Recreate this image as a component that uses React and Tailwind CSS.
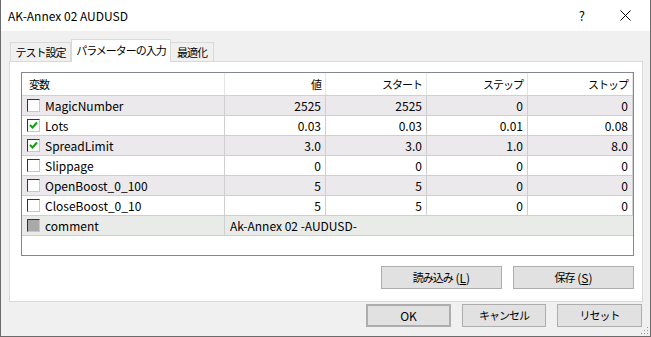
import React from 'react';

const rows = [
  { name: 'MagicNumber', checked: false, vals: ['2525', '2525', '0', '0'], shade: true },
  { name: 'Lots', checked: true, vals: ['0.03', '0.03', '0.01', '0.08'], shade: false },
  { name: 'SpreadLimit', checked: true, vals: ['3.0', '3.0', '1.0', '8.0'], shade: true },
  { name: 'Slippage', checked: false, vals: ['0', '0', '0', '0'], shade: false },
  { name: 'OpenBoost_0_100', checked: false, vals: ['5', '5', '0', '0'], shade: true },
  { name: 'CloseBoost_0_10', checked: false, vals: ['5', '5', '0', '0'], shade: false },
];

// narrow Japanese text, like Yu Gothic UI
const Jp = ({ children }) => (
  <span className="text-[11px] tracking-[-1px] whitespace-nowrap">{children}</span>
);

const Checkbox = ({ checked, disabled }) => (
  <div className="w-[13px] h-[13px] border-t border-l border-t-[#333] border-l-[#333] border-r border-b border-r-[#c8c8c8] border-b-[#c8c8c8] bg-white flex items-center justify-center shrink-0">
    {disabled && <div className="w-[11px] h-[11px] bg-[#a9a9a9]" />}
    {checked && (
      <svg width="9" height="9" viewBox="0 0 9 9">
        <path d="M1 4 L3.5 6.5 L8 1.5" fill="none" stroke="#12a012" strokeWidth="2" />
      </svg>
    )}
  </div>
);

const Btn = ({ children, className = '' }) => (
  <button className={`h-[23px] bg-[#e1e1e1] border border-[#adadad] text-[12px] text-black flex items-center justify-center whitespace-nowrap ${className}`}>
    {children}
  </button>
);

const cols = 'grid grid-cols-[203px_101px_101px_101px_105px]';

export default function App() {
  return (
    <div
      className="w-[651px] h-[337px] flex flex-col border-l border-r border-b border-[#6b6b6b] bg-[#f0f0f0] relative overflow-hidden"
      style={{ fontFamily: '"Noto Sans CJK JP", "Noto Sans", sans-serif' }}
    >
      {/* title bar */}
      <div className="h-[31px] bg-white flex items-center pl-[7px] shrink-0">
        <span className="text-[12px] text-black">AK-Annex 02 AUDUSD</span>
        <div className="flex-1" />
        <span className="text-[13px] text-black mr-[35px]">?</span>
        <svg width="11" height="11" viewBox="0 0 11 11" className="mr-[19px]">
          <path d="M0.5 0.5 L10.5 10.5 M10.5 0.5 L0.5 10.5" stroke="#000" strokeWidth="1" />
        </svg>
      </div>

      {/* tabs */}
      <div className="flex items-end h-[22px] mt-[8px] ml-[9px] text-black relative z-10">
        <div className="h-[19px] w-[61px] border border-b-0 border-[#d9d9d9] bg-[#f0f0f0] flex items-center justify-center"><Jp>テスト設定</Jp></div>
        <div className="h-[23px] w-[100px] border border-b-0 border-[#d9d9d9] bg-white flex items-center justify-center -mb-px pb-[2px]"><Jp>パラメーターの入力</Jp></div>
        <div className="h-[19px] w-[43px] border border-b-0 border-l-0 border-[#d9d9d9] bg-[#f0f0f0] flex items-center justify-center"><Jp>最適化</Jp></div>
      </div>

      {/* panel */}
      <div className="h-[241px] ml-[8px] mr-[7px] bg-white border border-[#d9d9d9] pt-[10px] pl-[11px] pr-[8px] flex flex-col">
        <div className="h-[184px] border border-[#828790] text-[12px] text-black">
          <div className={`${cols} h-[23px] border-b border-[#d0d0d0]`}>
            <div className="flex items-center pl-[7px] border-r border-[#e5e5e5]"><Jp>変数</Jp></div>
            <div className="flex items-center justify-end pr-[4px] border-r border-[#e5e5e5]"><Jp>値</Jp></div>
            <div className="flex items-center justify-end pr-[4px] border-r border-[#e5e5e5]"><Jp>スタート</Jp></div>
            <div className="flex items-center justify-end pr-[4px] border-r border-[#e5e5e5]"><Jp>ステップ</Jp></div>
            <div className="flex items-center justify-end pr-[4px] border-r border-[#e5e5e5]"><Jp>ストップ</Jp></div>
          </div>
          {rows.map((r) => (
            <div key={r.name} className={`${cols} h-[20px] border-b border-[#cfcfcf] ${r.shade ? 'bg-[#ebe9ec]' : 'bg-white'}`}>
              <div className="flex items-center pl-[5px] gap-[5px] border-r border-[#cfcfcf]">
                <Checkbox checked={r.checked} />
                <span>{r.name}</span>
              </div>
              {r.vals.map((v, i) => (
                <div key={i} className="flex items-center justify-end pr-[4px] border-r border-[#cfcfcf]">{v}</div>
              ))}
            </div>
          ))}
          <div className="grid grid-cols-[203px_408px] h-[20px] border-b border-[#cfcfcf] bg-[#e8ebe8]">
            <div className="flex items-center pl-[5px] gap-[5px] border-r border-[#cfcfcf]">
              <Checkbox disabled />
              <span>comment</span>
            </div>
            <div className="flex items-center pl-[5px]">Ak-Annex 02 -AUDUSD-</div>
          </div>
        </div>
        <div className="flex justify-end gap-[11px] mt-[10px]">
          <Btn className="w-[121px]"><Jp>読み込み</Jp>&nbsp;(<span className="underline">L</span>)</Btn>
          <Btn className="w-[121px]"><Jp>保存</Jp>&nbsp;(<span className="underline">S</span>)</Btn>
        </div>
      </div>

      {/* bottom buttons */}
      <div className="flex justify-end gap-[11px] mt-[2px] mr-[8px]">
        <Btn className="w-[85px] border-2 border-[#0078d7]">OK</Btn>
        <Btn className="w-[84px]"><Jp>キャンセル</Jp></Btn>
        <Btn className="w-[85px]"><Jp>リセット</Jp></Btn>
      </div>

      {/* resize grip */}
      <svg width="8" height="8" viewBox="0 0 8 8" className="absolute right-[1px] bottom-[1px]">
        <rect x="6" y="0" width="1" height="1" fill="#999" />
        <rect x="3" y="3" width="1" height="1" fill="#999" />
        <rect x="6" y="3" width="1" height="1" fill="#999" />
        <rect x="0" y="6" width="1" height="1" fill="#999" />
        <rect x="3" y="6" width="1" height="1" fill="#999" />
        <rect x="6" y="6" width="1" height="1" fill="#999" />
      </svg>
    </div>
  );
}
